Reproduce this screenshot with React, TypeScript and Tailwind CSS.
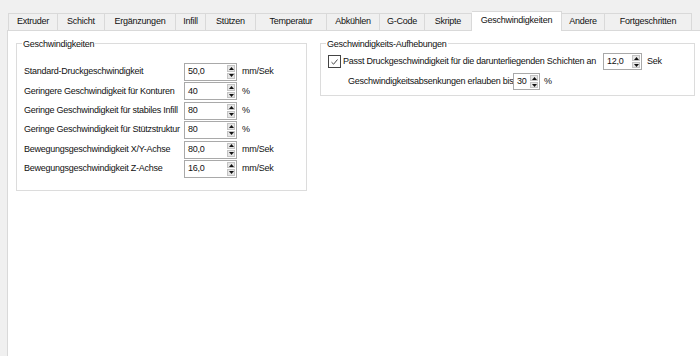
import React from 'react';

const tabs = [
  { label: 'Extruder', w: 50 },
  { label: 'Schicht', w: 47 },
  { label: 'Ergänzungen', w: 71 },
  { label: 'Infill', w: 30 },
  { label: 'Stützen', w: 50 },
  { label: 'Temperatur', w: 71 },
  { label: 'Abkühlen', w: 53 },
  { label: 'G-Code', w: 45 },
  { label: 'Skripte', w: 47 },
  { label: 'Geschwindigkeiten', w: 90, active: true },
  { label: 'Andere', w: 43 },
  { label: 'Fortgeschritten', w: 87 },
];

const rows = [
  { label: 'Standard-Druckgeschwindigkeit', value: '50,0', unit: 'mm/Sek' },
  { label: 'Geringere Geschwindigkeit für Konturen', value: '40', unit: '%' },
  { label: 'Geringe Geschwindigkeit für stabiles Infill', value: '80', unit: '%' },
  { label: 'Geringe Geschwindigkeit für Stützstruktur', value: '80', unit: '%' },
  { label: 'Bewegungsgeschwindigkeit X/Y-Achse', value: '80,0', unit: 'mm/Sek' },
  { label: 'Bewegungsgeschwindigkeit Z-Achse', value: '16,0', unit: 'mm/Sek' },
];

const Arrow: React.FC<{ up?: boolean }> = ({ up }) => (
  <div className="flex-1 flex items-center justify-center bg-[#e6e6e6] border border-[#c4c4c4]">
    <svg width="5" height="3" viewBox="0 0 5 3">
      <path d={up ? 'M0 3 L2.5 0 L5 3 Z' : 'M0 0 L2.5 3 L5 0 Z'} fill="#111" />
    </svg>
  </div>
);

const SpinBox: React.FC<{ value: string; w: string; h: string }> = ({ value, w, h }) => (
  <div className={`flex bg-white border border-[#a9a9a9] ${w} ${h}`}>
    <span className="flex-1 pl-[3px] flex items-center">{value}</span>
    <div className="w-[10px] flex flex-col p-px gap-px">
      <Arrow up />
      <Arrow />
    </div>
  </div>
);

const App: React.FC = () => {
  return (
    <div
      className="w-[700px] h-[356px] bg-[#f0f0f0] flex flex-col overflow-hidden text-[9px] tracking-[-0.25px] text-[#111]"
      style={{ fontFamily: '"Liberation Sans", Arial, sans-serif' }}
    >
      {/* Tab bar */}
      <div className="flex items-end pt-[11px] pl-[8px] h-[30px]">
        {tabs.map((t, i) =>
          t.active ? (
            <div
              key={t.label}
              className="relative z-10 h-[20px] -mb-px bg-white border-t border-r border-[#d9d9d9] flex items-center justify-center pb-[2px]"
              style={{ width: t.w }}
            >
              {t.label}
            </div>
          ) : (
            <div
              key={t.label}
              className={`h-[17px] bg-[#f0f0f0] border-t border-r border-[#d9d9d9] flex items-center justify-center ${i === 0 ? 'border-l' : ''}`}
              style={{ width: t.w }}
            >
              {t.label}
            </div>
          )
        )}
      </div>

      {/* Pane */}
      <div className="flex-1 ml-[7px] bg-white border-l border-t border-[#d9d9d9] pl-[8px] pt-[12px] flex items-start gap-[13px]">
        {/* Left group */}
        <div className="w-[291px] h-[148px] border border-[#dcdcdc] flex flex-col">
          <div className="-mt-[6px] ml-[5px] px-[1px] h-[12px] leading-[12px] bg-white w-fit">Geschwindigkeiten</div>
          <div className="mt-[13px] pl-[7px] flex flex-col gap-[1.4px]">
            {rows.map((r) => (
              <div key={r.label} className="flex items-center h-[18px]">
                <span className="w-[160px] whitespace-nowrap">{r.label}</span>
                <SpinBox value={r.value} w="w-[53px]" h="h-[18px]" />
                <span className="ml-[5px]">{r.unit}</span>
              </div>
            ))}
          </div>
        </div>

        {/* Right group */}
        <div className="w-[375px] h-[53px] border border-[#dcdcdc] flex flex-col">
          <div className="-mt-[6px] ml-[5px] px-[1px] h-[12px] leading-[12px] bg-white w-fit">Geschwindigkeits-Aufhebungen</div>
          <div className="mt-[3px] pl-[7px] flex items-center h-[17px]">
            <div className="w-[13px] h-[13px] border border-[#444] bg-white flex items-center justify-center">
              <svg width="9" height="8" viewBox="0 0 9 8">
                <path d="M1.5 4.2 L3.6 6.2 L7.5 1.5" fill="none" stroke="#333" strokeWidth="0.9" />
              </svg>
            </div>
            <span className="ml-[2px] w-[260px] whitespace-nowrap">
              Passt Druckgeschwindigkeit für die darunterliegenden Schichten an
            </span>
            <SpinBox value="12,0" w="w-[39px]" h="h-[17px]" />
            <span className="ml-[5px]">Sek</span>
          </div>
          <div className="mt-[3px] pl-[27px] flex items-center h-[17px]">
            <span className="w-[165px] whitespace-nowrap">Geschwindigkeitsabsenkungen erlauben bis</span>
            <SpinBox value="30" w="w-[27px]" h="h-[17px]" />
            <span className="ml-[4px]">%</span>
          </div>
        </div>
      </div>
    </div>
  );
};

export default App;
